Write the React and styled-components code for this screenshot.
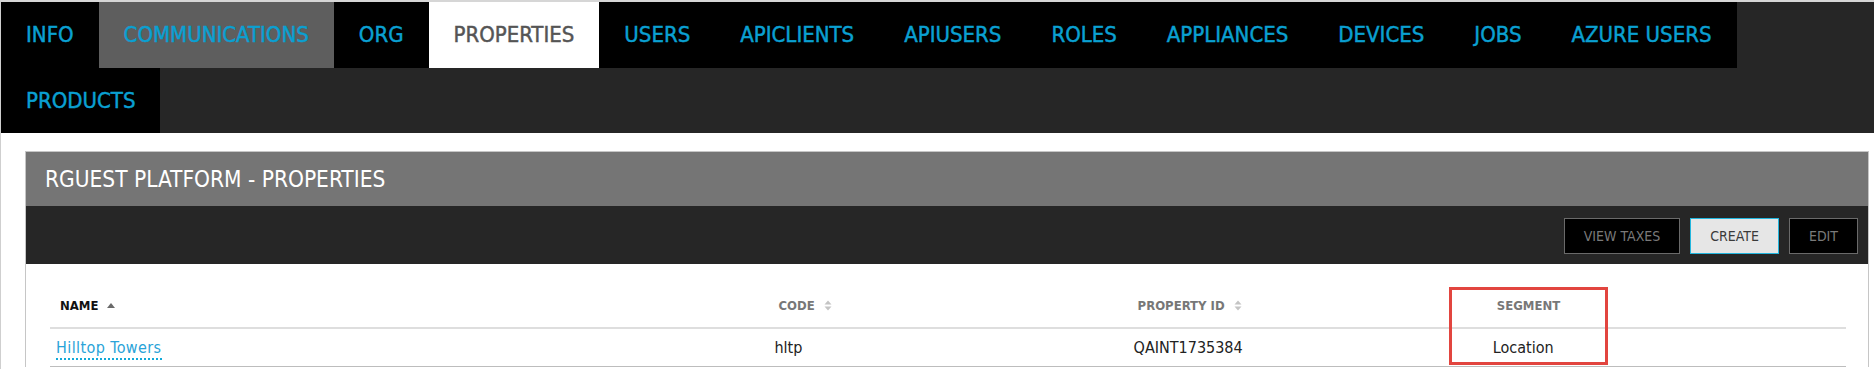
import React from 'react';
import styled, { createGlobalStyle } from 'styled-components';

const GlobalStyle = createGlobalStyle`
    html, body {
        margin: 0;
        padding: 0;
        background: #fff;
    }
    body {
        font-family: "DejaVu Sans Condensed", "DejaVu Sans", sans-serif;
        font-stretch: condensed;
    }
    * {
        box-sizing: border-box;
    }
`;

const TABS = [
    'INFO', 'COMMUNICATIONS', 'ORG', 'PROPERTIES', 'USERS', 'APICLIENTS', 'APIUSERS',
    'ROLES', 'APPLIANCES', 'DEVICES', 'JOBS', 'AZURE USERS', 'PRODUCTS',
];

const COLUMNS = [
    { key: 'name', label: 'NAME', sort: 'asc', width: '40%' },
    { key: 'code', label: 'CODE', sort: 'both', width: '20%' },
    { key: 'propertyId', label: 'PROPERTY ID', sort: 'both', width: '20%' },
    { key: 'segment', label: 'SEGMENT', sort: null, width: '20%' },
];

const ROWS = [
    { name: 'Hilltop Towers', code: 'hltp', propertyId: 'QAINT1735384', segment: 'Location' },
];

const SortIcon = ({ dir }) => {
    if (dir === 'asc') {
        return (
            <SortSvg width="8" height="5" viewBox="0 0 8 5">
                <path d="M0 5L4 0L8 5Z" fill="#6a6a6a" />
            </SortSvg>
        );
    }
    return (
        <SortSvg width="8" height="11" viewBox="0 0 8 11">
            <path d="M0.5 4.5L4 0.5L7.5 4.5Z M0.5 6.5L4 10.5L7.5 6.5Z" fill="#c4c4c4" />
        </SortSvg>
    );
};

export default function App() {
    return (
        <Page>
            <GlobalStyle />
            <Nav>
                {TABS.map(t => (
                    <Tab
                        key={t}
                        href="#"
                        $active={t === 'PROPERTIES'}
                        $hover={t === 'COMMUNICATIONS'}
                    >
                        {t}
                    </Tab>
                ))}
            </Nav>

            <Panel>
                <PanelHeader>RGUEST PLATFORM - PROPERTIES</PanelHeader>
                <Toolbar>
                    <ToolButton>VIEW TAXES</ToolButton>
                    <ToolButton $primary>CREATE</ToolButton>
                    <ToolButton>EDIT</ToolButton>
                </Toolbar>

                <TableWrap>
                    <Table>
                        <colgroup>
                            {COLUMNS.map(c => <col key={c.key} style={{ width: c.width }} />)}
                        </colgroup>
                        <thead>
                            <tr>
                                {COLUMNS.map(c => (
                                    <Th key={c.key} $sorted={c.sort === 'asc'}>
                                        {c.label}
                                        {c.sort && <SortIcon dir={c.sort} />}
                                    </Th>
                                ))}
                            </tr>
                        </thead>
                        <tbody>
                            {ROWS.map(r => (
                                <tr key={r.code}>
                                    <Td><RowLink href="#">{r.name}</RowLink></Td>
                                    <Td>{r.code}</Td>
                                    <Td>{r.propertyId}</Td>
                                    <Td>{r.segment}</Td>
                                </tr>
                            ))}
                        </tbody>
                    </Table>
                    <Highlight />
                </TableWrap>
            </Panel>
        </Page>
    );
}

const Page = styled.div`
    min-height: 100vh;
    border-top: 2px solid #d6d6d6;
    border-left: 1px solid #cfcfcf;
    overflow: hidden;
`;

const Nav = styled.nav`
    display: flex;
    flex-wrap: wrap;
    background: #262626;
`;

const Tab = styled.a`
    display: flex;
    align-items: center;
    height: 65.5px;
    padding: 0 25px;
    font-size: 22px;
    text-decoration: none;
    white-space: nowrap;
    background: ${p => (p.$active ? '#fff' : p.$hover ? '#5e5e5e' : '#000')};
    color: ${p => (p.$active ? '#555' : '#0aa0d2')};
    -webkit-text-stroke: 0.45px currentColor;
`;

const Panel = styled.section`
    margin: 18px 5px 0 24px;
    border: 1px solid #c6c6c6;
    border-bottom: none;
    background: #fff;
`;

const PanelHeader = styled.h2`
    margin: 0;
    height: 54px;
    display: flex;
    align-items: center;
    padding-left: 19px;
    background: #757575;
    color: #fff;
    font-size: 22.5px;
    font-weight: normal;
`;

const Toolbar = styled.div`
    display: flex;
    justify-content: flex-end;
    gap: 10px;
    height: 58px;
    padding: 12px 10px 0 0;
    background: #262626;
`;

const ToolButton = styled.button`
    height: 36px;
    padding: 0 19px;
    font-family: inherit;
    font-stretch: condensed;
    font-size: 14px;
    cursor: pointer;
    background: ${p => (p.$primary ? '#e6e6e6' : '#000')};
    color: ${p => (p.$primary ? '#3a3a3a' : '#7a7a7a')};
    border: 1px solid ${p => (p.$primary ? '#22b6de' : '#6a6a6a')};
`;

const TableWrap = styled.div`
    position: relative;
    margin: 20px 22px 0 24px;
`;

const Table = styled.table`
    width: 100%;
    border-collapse: collapse;
    table-layout: fixed;
`;

const Th = styled.th`
    height: 44px;
    padding: 0 0 0 10px;
    text-align: left;
    vertical-align: middle;
    font-size: 13px;
    font-weight: bold;
    color: ${p => (p.$sorted ? '#111' : '#777')};
    border-bottom: 2px solid #dedede;
    white-space: nowrap;
`;

const SortSvg = styled.svg`
    margin-left: 9px;
    vertical-align: middle;
    position: relative;
    top: -1px;
`;

const Td = styled.td`
    height: 38px;
    padding: 0 0 0 6px;
    font-size: 16px;
    color: #222;
    border-bottom: 1px solid #bdbdbd;
    vertical-align: middle;
`;

const RowLink = styled.a`
    color: #2aa3d8;
    text-decoration: none;
    letter-spacing: 0.4px;
    border-bottom: 2px dotted #12a9d8;
    padding-bottom: 1px;
`;

const Highlight = styled.div`
    position: absolute;
    left: 1399px;
    top: 3px;
    width: 159px;
    height: 78px;
    border: 3px solid #e2453f;
    pointer-events: none;
`;
